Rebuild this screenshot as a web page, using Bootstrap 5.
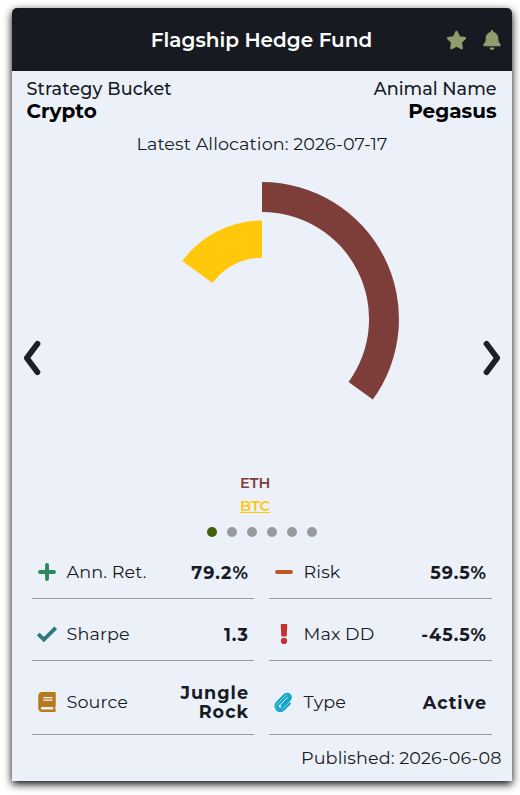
<!DOCTYPE html>
<html lang="en">
<head>
<meta charset="utf-8">
<meta name="viewport" content="width=device-width, initial-scale=1">
<title>Flagship Hedge Fund</title>
<link href="https://cdn.jsdelivr.net/npm/bootstrap@5.3.0/dist/css/bootstrap.min.css" rel="stylesheet">
<style>
body{background:#fff;font-family:Montserrat,Inter,"Open Sans",sans-serif;color:#171b26;font-size:17.6px;line-height:22px;min-height:795px;padding:8px 0 0 12px}
.fund{width:500px;height:773px;background:#ecf1f9;border-radius:5px 5px 0 0;box-shadow:0 3px 8px #000}
.fund-head{height:63px;background:#171b21;border-radius:5px 5px 0 0;display:grid;grid-template-columns:1fr auto 1fr;padding:0 11px 0 10px}
.fund-title{font-size:20px;font-weight:600;color:#fff}
.head-icons{gap:16px}
.head-icons svg{fill:#8f9c6d;display:block}
.names{padding:7px 15.500px 0 14.500px;font-weight:500}
.names .bucket{letter-spacing:.13px}
.names strong{display:block;font-size:20px;font-weight:700;color:#000;line-height:23px}
.alloc{margin-top:10px;line-height:22px;letter-spacing:.09px}
.chart-row{height:316px;padding:11px 11px 0}
.chart-row .arrow{margin-top:79px}
.legend-list{font-size:14.600px;font-weight:600;line-height:23px;width:34px;margin-left:228px;padding-top:1px}
.eth{color:#7d3d38}
.btc{color:#ffc80a}
.dots{gap:10px;margin-top:9px}
.dots span{width:10px;height:10px;border-radius:50%;background:#989a9e}
.dots .on{background:#415f0f}
.stats{display:grid;grid-template-columns:222px 223px;grid-template-rows:52px 52px 64px;gap:10px 15px;margin:10px 20px 0}
.stat{border-bottom:1px solid #959aa5;padding:0 6px 1px 5px}
.stat span{letter-spacing:.1px}
.stat svg{width:20px;height:20px;flex:none;margin-right:9.500px}
.stat b{margin-left:auto;font-weight:700;letter-spacing:1px;margin-right:-1px;text-align:right;line-height:19px}
.published{padding:12px 10.500px 0;letter-spacing:.09px}
</style>
</head>
<body>
<main class="fund">
  <header class="fund-head align-items-center">
    <span></span>
    <h1 class="fund-title m-0">Flagship Hedge Fund</h1>
    <div class="head-icons d-flex justify-content-end align-items-center">
      <svg width="21" height="20" viewBox="0 0 576 512"><path d="M316.900 18C311.600 7 300.400 0 288.100 0s-23.400 7-28.800 18L195 150.300 51.400 171.500c-12 1.800-22 10.200-25.700 21.700s-.7 24.200 7.900 32.700L137.800 329 113.200 474.700c-2 12 3 24.200 12.900 31.300s23 8 33.800 2.300l128.300-68.500 128.300 68.500c10.800 5.700 23.900 4.900 33.800-2.300s14.900-19.300 12.900-31.300L438.500 329 542.700 225.900c8.600-8.500 11.700-21.200 7.900-32.700s-13.700-19.900-25.700-21.700L381.200 150.300z"/></svg>
      <svg width="18" height="20" viewBox="0 0 448 512"><path d="M224 0c-17.700 0-32 14.300-32 32v19.200C119 66 64 130.600 64 208v18.800c0 47-17.300 92.400-48.500 127.600l-7.400 8.300c-8.400 9.400-10.400 22.900-5.300 34.400S19.400 416 32 416h384c12.600 0 24-7.400 29.200-18.900s3.100-25-5.300-34.400l-7.400-8.300C401.300 319.200 384 273.900 384 226.800V208c0-77.400-55-142-128-156.800V32c0-17.700-14.300-32-32-32zm45.300 493.300c12-12 18.700-28.300 18.700-45.300H160c0 17 6.700 33.300 18.700 45.300S207 512 224 512s33.300-6.700 45.300-18.700z"/></svg>
    </div>
  </header>

  <section class="names d-flex justify-content-between">
    <div><span class="bucket">Strategy Bucket</span><strong>Crypto</strong></div>
    <div class="text-end"><span>Animal Name</span><strong>Pegasus</strong></div>
  </section>
  <div class="alloc text-center">Latest Allocation: 2026-07-17</div>

  <section class="chart-row d-flex align-items-center justify-content-between">
    <svg class="arrow" width="18" height="36" viewBox="0 0 18 36" fill="none" stroke="#1b202c" stroke-width="5.700" stroke-linecap="round" stroke-linejoin="round"><path d="M14.500 3.800 3.800 18 14.500 32.200"/></svg>
    <svg width="290" height="290" viewBox="-145 -145 290 290"><path fill="#7d3d38" d="M0-137A137 137 0 0 1 110.800 80.500L86.600 62.900A107 107 0 0 0 0-107Z"/><path fill="#ffc80a" d="M-79.700-57.900A98.500 98.500 0 0 1 0-98.500V-61.300A61.300 61.300 0 0 0-49.600-36Z"/></svg>
    <svg class="arrow" width="18" height="36" viewBox="0 0 18 36" fill="none" stroke="#1b202c" stroke-width="5.700" stroke-linecap="round" stroke-linejoin="round"><path d="M3.500 3.800 14.200 18 3.500 32.200"/></svg>
  </section>

  <div class="legend-list">
    <div class="eth">ETH</div>
    <div class="btc text-decoration-underline">BTC</div>
  </div>
  <div class="dots d-flex justify-content-center"><span class="on"></span><span></span><span></span><span></span><span></span><span></span></div>

  <section class="stats">
    <div class="stat d-flex align-items-center">
      <svg viewBox="-32 -32 512 512" fill="none" stroke="#2f8a5b" stroke-width="100" stroke-linecap="round"><path d="M224 45v358M45 224h358"/></svg>
      <span>Ann. Ret.</span><b>79.2%</b></div>
    <div class="stat d-flex align-items-center">
      <svg viewBox="-32 -32 512 512" fill="none" stroke="#c05621" stroke-width="100" stroke-linecap="round"><path d="M45 224h358"/></svg>
      <span>Risk</span><b>59.5%</b></div>
    <div class="stat d-flex align-items-center">
      <svg viewBox="0 0 512 512" fill="none" stroke="#2c7a7b" stroke-width="98"><path d="m32 256 144 144L480 98"/></svg>
      <span>Sharpe</span><b>1.3</b></div>
    <div class="stat d-flex align-items-center">
      <svg viewBox="-160 0 512 512" fill="#c53030"><path d="M25 0h142c8 0 13 6 13 14l-14 288c0 10-7 18-17 18H43c-10 0-17-8-17-18L12 14C12 6 17 0 25 0z"/><circle cx="96" cy="432" r="80"/></svg>
      <span>Max DD</span><b>-45.5%</b></div>
    <div class="stat d-flex align-items-center">
      <svg viewBox="-32 0 512 512" fill="#b7791f"><path fill-rule="evenodd" d="M96 0C43 0 0 43 0 96v320c0 53 43 96 96 96h328c13 0 24-11 24-24v-24c0-8-4-14-9-18-4-15-4-53 0-68 5-4 9-10 9-18V24c0-13-11-24-24-24zM134 128h228c4 0 6 3 6 6v20c0 3-2 6-6 6H134c-3 0-6-3-6-6v-20c0-3 3-6 6-6zm0 64h228c4 0 6 3 6 6v20c0 3-2 6-6 6H134c-3 0-6-3-6-6v-20c0-3 3-6 6-6zM96 384h285c-2 17-2 47 0 64H96c-42 0-42-64 0-64z"/></svg>
      <span>Source</span><b>Jungle<br>Rock</b></div>
    <div class="stat d-flex align-items-center">
      <svg viewBox="0 0 512 512" fill="none" stroke="#0ea5c6" stroke-width="53" stroke-linecap="round" stroke-linejoin="round"><path d="M193 347 365 170c39-42-10-91-50-51L121 316c-65 70 21 153 87 87l187-192c92-96-34-231-130-134L82 264c-126 134 52 308 178 180l146-149"/></svg>
      <span>Type</span><b>Active</b></div>
  </section>
  <div class="published text-end">Published: 2026-06-08</div>
</main>
<script src="https://cdn.jsdelivr.net/npm/bootstrap@5.3.0/dist/js/bootstrap.bundle.min.js"></script>
</body>
</html>
